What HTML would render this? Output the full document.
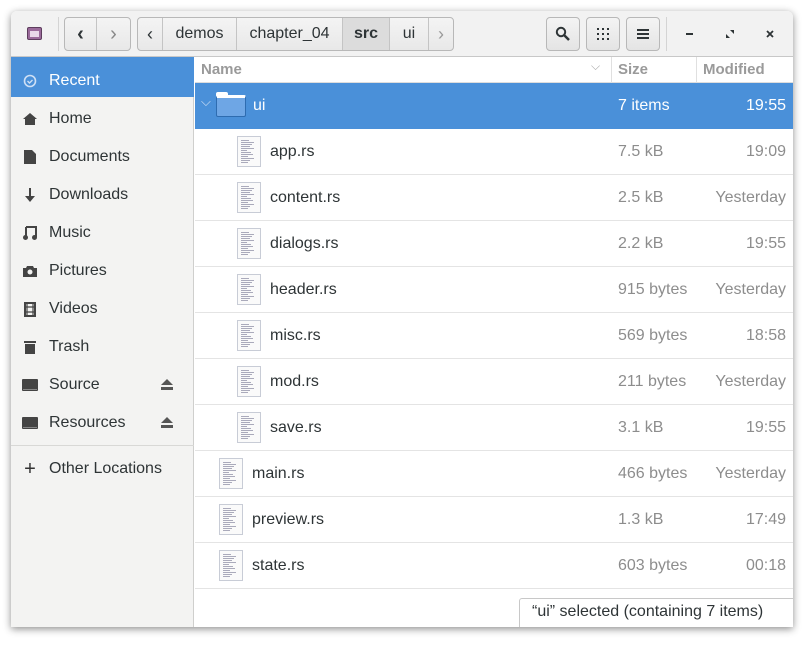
<!DOCTYPE html>
<html><head><style>
*{box-sizing:border-box;margin:0;padding:0}
body{width:812px;height:646px;background:#fff;font-family:"Liberation Sans",sans-serif;position:relative;overflow:hidden}
.win{position:absolute;left:11px;top:11px;width:782px;height:616px;background:#fff;border-radius:6px 6px 0 0;box-shadow:0 2px 8px rgba(0,0,0,.45);overflow:hidden}
.hb{position:absolute;left:0;top:0;width:782px;height:46px;background:#f2f2f2;border-bottom:1px solid #c8c8c8}
.btn{position:absolute;top:6px;height:34px;border:1px solid #b8b8b8;border-radius:4px;background:linear-gradient(#f4f4f4,#e4e4e4);color:#2e3436;font-size:16px;display:flex;align-items:center;justify-content:center}
.seg{position:absolute;top:6px;height:34px;display:flex;border:1px solid #b8b8b8;border-radius:4px;overflow:hidden;background:linear-gradient(#f4f4f4,#e8e8e8)}
.seg div{border-right:1px solid #c4c4c4;display:flex;align-items:center;justify-content:center;font-size:16px;color:#2e3436}
.seg div:last-child{border-right:none}
.side{position:absolute;left:0;top:46px;width:183px;height:570px;background:#f3f3f2;border-right:1px solid #cfcfcd}
.si{position:absolute;left:0;width:183px;height:38px;display:flex;align-items:center;padding-top:6px;font-size:16px;color:#2e3436}
.si .ic{width:38px;display:flex;justify-content:center;color:#444}
.si.sel{background:#4a90d9;color:#fff;padding-top:8px;height:40px}
.main{position:absolute;left:184px;top:46px;width:598px;height:570px}
.ch{position:absolute;top:0;height:26px;border-bottom:1px solid #ddd;width:598px;font-size:15px;font-weight:bold;color:#9a9a9a}
.row{position:absolute;left:0;width:598px;height:46px;border-bottom:1px solid #e4e4e4;font-size:16px;color:#2e3436}
.row span{position:absolute;top:14px}
.row .sz{left:423px;color:#8d8d8d}
.row .md{right:7px;color:#8d8d8d}
.row.sel{background:#4a90d9;color:#fff;border-bottom-color:#4a90d9}
.row.sel .sz,.row.sel .md{color:#fff}
.doc{position:absolute;top:7px;width:24px;height:31px;border:1px solid #c8ccd6;background:#fafafa}
.doc i{position:absolute;left:3px;height:1px;background:#aab;display:block}
</style></head><body>
<div class="win">
<div class="hb">
 <div style="position:absolute;left:16px;top:16px;width:15px;height:13px;background:#9a6a9a;border:1px solid #5d3d5d;border-radius:2px"><div style="position:absolute;left:2px;top:3px;width:9px;height:6px;background:#e8d8e8"></div></div>
 <div style="position:absolute;left:47px;top:6px;width:1px;height:34px;background:#d4d4d4"></div>
 <div class="seg" style="left:53px;"><div style="width:32px;font-size:20px;font-weight:bold">‹</div><div style="width:33px;font-size:20px;color:#888">›</div></div>
 <div class="seg" style="left:126px;">
  <div style="width:25px;font-size:18px">‹</div>
  <div style="width:74px">demos</div>
  <div style="width:106px">chapter_04</div>
  <div style="width:47px;font-weight:bold;background:#dcdcdc">src</div>
  <div style="width:39px">ui</div>
  <div style="width:24px;color:#999;font-size:18px">›</div>
 </div>
 <div class="btn" style="left:535px;width:34px"><svg width="16" height="16"><circle cx="6" cy="6" r="4.2" fill="none" stroke="#2e3436" stroke-width="2"/><path d="M9 9l5 5" stroke="#2e3436" stroke-width="2.5"/></svg></div>
 <div class="btn" style="left:575px;width:34px"><svg width="12" height="12" fill="#2e3436"><rect x="0" y="0" width="2" height="2"/><rect x="5" y="0" width="2" height="2"/><rect x="10" y="0" width="2" height="2"/><rect x="0" y="5" width="2" height="2"/><rect x="5" y="5" width="2" height="2"/><rect x="10" y="5" width="2" height="2"/><rect x="0" y="10" width="2" height="2"/><rect x="5" y="10" width="2" height="2"/><rect x="10" y="10" width="2" height="2"/></svg></div>
 <div class="btn" style="left:615px;width:34px"><svg width="12" height="12" fill="#2e3436"><rect y="1" width="12" height="2"/><rect y="5" width="12" height="2"/><rect y="9" width="12" height="2"/></svg></div>
 <div style="position:absolute;left:655px;top:6px;width:1px;height:34px;background:#d4d4d4"></div>
 <div style="position:absolute;left:675px;top:22px;width:7px;height:2px;background:#2e3436"></div>
 <svg style="position:absolute;left:715px;top:19px" width="8" height="8"><path d="M0 8V4L4 8ZM8 0V4L4 0Z" fill="#2e3436"/></svg>
 <svg style="position:absolute;left:755px;top:19px" width="8" height="8"><path d="M1 1L7 7M7 1L1 7" stroke="#2e3436" stroke-width="1.8"/></svg>
</div>
<div class="side">
 <div class="si sel" style="top:0"><span class="ic"><svg width="14" height="14"><circle cx="7" cy="7" r="5.5" fill="none" stroke="#cfe0f5" stroke-width="1.6"/><path d="M4.5 7l2 2 3-3" fill="none" stroke="#cfe0f5" stroke-width="1.4"/></svg></span>Recent</div>
 <div class="si" style="top:40px"><span class="ic"><svg width="14" height="14"><path d="M7 1L0 7h2v6h10V7h2z" fill="#444"/></svg></span>Home</div>
 <div class="si" style="top:78px"><span class="ic"><svg width="12" height="14"><path d="M0 0h8l4 4v10H0z" fill="#444"/></svg></span>Documents</div>
 <div class="si" style="top:116px"><span class="ic"><svg width="12" height="14"><path d="M5 0h2v8h4l-5 6-5-6h4z" fill="#444"/></svg></span>Downloads</div>
 <div class="si" style="top:154px"><span class="ic"><svg width="14" height="14"><path d="M3 1h10v10" fill="none" stroke="#444" stroke-width="2"/><path d="M3 1v10" stroke="#444" stroke-width="2"/><circle cx="2.5" cy="11.5" r="2.5" fill="#444"/><circle cx="11.5" cy="11.5" r="2.5" fill="#444"/></svg></span>Music</div>
 <div class="si" style="top:192px"><span class="ic"><svg width="14" height="12"><path d="M0 3h3l1-2h6l1 2h3v9H0z" fill="#444"/><circle cx="7" cy="7" r="2.5" fill="#f3f3f2"/></svg></span>Pictures</div>
 <div class="si" style="top:230px"><span class="ic"><svg width="12" height="15"><rect x="1" y="1" width="10" height="13" fill="none" stroke="#444" stroke-width="2"/><path d="M3 1v13M9 1v13M1 5h10M1 10h10" stroke="#444" stroke-width="1.2"/></svg></span>Videos</div>
 <div class="si" style="top:268px"><span class="ic"><svg width="12" height="14"><path d="M0 1h12v2H0zM1 4h10v10H1z" fill="#444"/></svg></span>Trash</div>
 <div class="si" style="top:306px"><span class="ic"><svg width="16" height="12"><rect width="16" height="12" rx="1" fill="#444"/><rect x="1" y="10" width="14" height="1" fill="#888"/></svg></span>Source<svg style="position:absolute;left:150px;top:16px" width="12" height="11"><path d="M6 0l6 6H0z M0 8h12v3H0z" fill="#555"/></svg></div>
 <div class="si" style="top:344px"><span class="ic"><svg width="16" height="12"><rect width="16" height="12" rx="1" fill="#444"/><rect x="1" y="10" width="14" height="1" fill="#888"/></svg></span>Resources<svg style="position:absolute;left:150px;top:16px" width="12" height="11"><path d="M6 0l6 6H0z M0 8h12v3H0z" fill="#555"/></svg></div>
 <div style="position:absolute;left:0;top:388px;width:183px;height:1px;background:#d8d8d6"></div>
 <div class="si" style="top:390px"><span class="ic" style="font-size:20px;color:#333">+</span>Other Locations</div>
</div>
<div class="main">
 <div class="ch"><span style="position:absolute;left:6px;top:4px">Name</span><span style="position:absolute;left:396px;top:2px;color:#aaa;font-weight:normal;font-size:12px">⌵</span><div style="position:absolute;left:416px;top:0;width:1px;height:26px;background:#e0e0e0"></div><span style="position:absolute;left:423px;top:4px">Size</span><div style="position:absolute;left:501px;top:0;width:1px;height:26px;background:#e0e0e0"></div><span style="position:absolute;left:508px;top:4px">Modified</span></div>
 <div class="row sel" style="top:26px"><span style="left:6px;top:11px;font-size:13px;color:#cfe0f5">⌵</span><div style="position:absolute;left:21px;top:9px;width:30px;height:25px"><div style="position:absolute;left:0;top:0;width:12px;height:5px;background:#fff;border-radius:2px 2px 0 0"></div><div style="position:absolute;left:0;top:3px;width:30px;height:22px;background:#6ea6e5;border:1px solid #2e6cb0;border-radius:2px;border-top:3px solid #fff"></div></div><span style="left:58px">ui</span><span class="sz">7 items</span><span class="md">19:55</span></div>
 <div class="row" style="top:72px"><div class="doc" style="left:42px"></div><span style="left:75px">app.rs</span><span class="sz">7.5 kB</span><span class="md">19:09</span></div>
 <div class="row" style="top:118px"><div class="doc" style="left:42px"></div><span style="left:75px">content.rs</span><span class="sz">2.5 kB</span><span class="md">Yesterday</span></div>
 <div class="row" style="top:164px"><div class="doc" style="left:42px"></div><span style="left:75px">dialogs.rs</span><span class="sz">2.2 kB</span><span class="md">19:55</span></div>
 <div class="row" style="top:210px"><div class="doc" style="left:42px"></div><span style="left:75px">header.rs</span><span class="sz">915 bytes</span><span class="md">Yesterday</span></div>
 <div class="row" style="top:256px"><div class="doc" style="left:42px"></div><span style="left:75px">misc.rs</span><span class="sz">569 bytes</span><span class="md">18:58</span></div>
 <div class="row" style="top:302px"><div class="doc" style="left:42px"></div><span style="left:75px">mod.rs</span><span class="sz">211 bytes</span><span class="md">Yesterday</span></div>
 <div class="row" style="top:348px"><div class="doc" style="left:42px"></div><span style="left:75px">save.rs</span><span class="sz">3.1 kB</span><span class="md">19:55</span></div>
 <div class="row" style="top:394px"><div class="doc" style="left:24px"></div><span style="left:57px">main.rs</span><span class="sz">466 bytes</span><span class="md">Yesterday</span></div>
 <div class="row" style="top:440px"><div class="doc" style="left:24px"></div><span style="left:57px">preview.rs</span><span class="sz">1.3 kB</span><span class="md">17:49</span></div>
 <div class="row" style="top:486px"><div class="doc" style="left:24px"></div><span style="left:57px">state.rs</span><span class="sz">603 bytes</span><span class="md">00:18</span></div>
 <div style="position:absolute;left:324px;top:541px;width:280px;height:31px;border:1px solid #c8c8c8;border-radius:3px 3px 0 0;background:#fff;font-size:16px;color:#2e3436;padding:4px 0 0 12px">“ui” selected (containing 7 items)</div>
</div>
</div>
<script>
document.querySelectorAll('.doc').forEach(d=>{const w=[8,13,11,9,13,6,10,12,7,13,9,7];let h='';w.forEach((x,i)=>h+=`<i style="top:${3+i*2}px;width:${x}px"></i>`);d.innerHTML=h;});
</script>
</body></html>
